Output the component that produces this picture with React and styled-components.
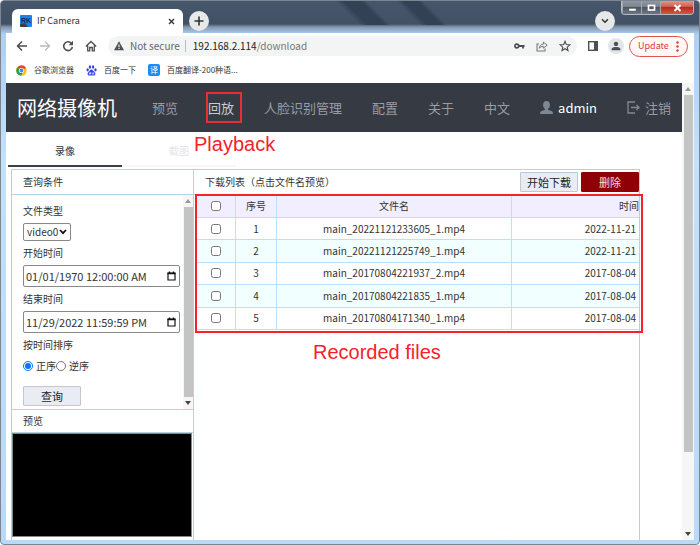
import React, { useState } from "react";
import styled, { createGlobalStyle } from "styled-components";

const FILES = [
  { id: 1, name: "main_20221121233605_1.mp4", date: "2022-11-21" },
  { id: 2, name: "main_20221121225749_1.mp4", date: "2022-11-21" },
  { id: 3, name: "main_20170804221937_2.mp4", date: "2017-08-04" },
  { id: 4, name: "main_20170804221835_1.mp4", date: "2017-08-04" },
  { id: 5, name: "main_20170804171340_1.mp4", date: "2017-08-04" },
];

const NAV = ["预览", "回放", "人脸识别管理", "配置", "关于"];

export default function App() {
  const [order, setOrder] = useState("asc");
  const [checked, setChecked] = useState([]);

  const toggle = (id) =>
    setChecked(checked.includes(id) ? checked.filter((c) => c !== id) : [...checked, id]);
  const toggleAll = () =>
    setChecked(checked.length === FILES.length ? [] : FILES.map((f) => f.id));

  return (
    <>
      <GlobalStyle />
      <Window>
        <TitleBar>
          <BrowserTab>
            <Favicon />
            <span>IP Camera</span>
            <TabClose aria-label="Close tab">
              <svg width="7" height="7" viewBox="0 0 7 7">
                <path d="M1 1L6 6M6 1L1 6" stroke="#333" strokeWidth="1.4" />
              </svg>
            </TabClose>
          </BrowserTab>
          <RoundButton aria-label="New tab">
            <svg width="10" height="10" viewBox="0 0 10 10">
              <path d="M5 .5V9.500M.5 5H9.500" stroke="#333" strokeWidth="1.6" />
            </svg>
          </RoundButton>
          <Spacer />
          <RoundButton aria-label="Search tabs">
            <svg width="8" height="6" viewBox="0 0 8 6">
              <path d="M1 1.200L4 4.200L7 1.200" stroke="#333" strokeWidth="1.5" fill="none" />
            </svg>
          </RoundButton>
          <WindowButtons>
            <WindowButton aria-label="Minimize">
              <svg width="9" height="8" viewBox="0 0 9 8">
                <rect x="1" y="4.500" width="7" height="2.500" fill="#fff" stroke="#555" strokeWidth=".4" />
              </svg>
            </WindowButton>
            <WindowButton aria-label="Maximize">
              <svg width="9" height="8" viewBox="0 0 9 8">
                <rect x="1.500" y="1.500" width="6" height="4.500" fill="#555" stroke="#fff" strokeWidth="1.700" />
              </svg>
            </WindowButton>
            <WindowButton aria-label="Close" $close>
              <svg width="9" height="8" viewBox="0 0 9 8">
                <path d="M1.500 1L7.500 7M7.500 1L1.500 7" stroke="#fff" strokeWidth="2" />
              </svg>
            </WindowButton>
          </WindowButtons>
        </TitleBar>

        <Toolbar>
          <IconButton aria-label="Back">
            <svg width="12" height="12" viewBox="0 0 12 12">
              <path d="M11 6H2M6 1.500L1.500 6L6 10.500" stroke="#4c4f54" strokeWidth="1.5" fill="none" />
            </svg>
          </IconButton>
          <IconButton aria-label="Forward">
            <svg width="12" height="12" viewBox="0 0 12 12">
              <path d="M1 6H10M6 1.500L10.500 6L6 10.500" stroke="#b9bbbe" strokeWidth="1.3" fill="none" />
            </svg>
          </IconButton>
          <IconButton aria-label="Reload">
            <svg width="12" height="12" viewBox="0 0 12 12">
              <path d="M9.800 3.800A4.400 4.400 0 1 0 10.400 7" stroke="#4c4f54" strokeWidth="1.6" fill="none" />
              <path d="M11 .8V5.200H6.600Z" fill="#4c4f54" />
            </svg>
          </IconButton>
          <IconButton aria-label="Home">
            <svg width="12" height="12" viewBox="0 0 12 12">
              <path d="M.8 6.500L6 1.500L11.200 6.500M2.700 5.500V10.800H4.700V7.500H7.300V10.800H9.300V5.500" stroke="#4c4f54" strokeWidth="1.3" fill="none" />
            </svg>
          </IconButton>
          <AddressBar>
            <svg width="10" height="10" viewBox="0 0 10 10">
              <path d="M5 .3L10 9.300H0Z" fill="#4c4f54" />
              <path d="M5 3.500V6.200M5 7V8.100" stroke="#fff" strokeWidth="1.100" />
            </svg>
            <Secure>Not secure</Secure>
            <Url>
              192.168.2.114<em>/download</em>
            </Url>
            <AddressIcons>
              <svg width="11" height="8" viewBox="0 0 11 8">
                <circle cx="2.800" cy="4" r="1.900" fill="none" stroke="#4c4f54" strokeWidth="1.600" />
                <path d="M4.800 4H10.500M9 4V6.400" stroke="#4c4f54" strokeWidth="1.800" />
              </svg>
              <svg width="12" height="12" viewBox="0 0 12 12">
                <path d="M3 4H1V11H9V8.500" stroke="#777" strokeWidth="1.100" fill="none" />
                <path d="M3.300 8.300C3.500 5.500 5 4.300 7.300 4.200V2L11.200 5.200L7.300 8.200V6.300C5.500 6.300 4.300 6.800 3.300 8.300Z" stroke="#777" fill="none" />
              </svg>
              <svg width="12" height="12" viewBox="0 0 12 12">
                <path d="M6 1.300L7.300 4.500L10.800 4.800L8.200 7.100L9 10.500L6 8.700L3 10.500L3.800 7.100L1.200 4.800L4.700 4.500Z" stroke="#4c4f54" strokeWidth="1.100" fill="none" />
              </svg>
            </AddressIcons>
          </AddressBar>
          <BarActions>
            <svg width="10" height="10" viewBox="0 0 10 10">
              <rect x=".7" y=".7" width="8.600" height="8.600" fill="none" stroke="#4c4f54" strokeWidth="1.400" />
              <rect x="6" y="1" width="3.300" height="8" fill="#4c4f54" />
            </svg>
            <Avatar aria-label="Profile">
              <svg width="10" height="10" viewBox="0 0 10 10">
                <circle cx="5" cy="2.900" r="2.200" fill="#4c5058" />
                <path d="M.6 9.300V8C.6 6.500 3 5.900 5 5.900S9.400 6.500 9.400 8V9.300Z" fill="#4c5058" />
              </svg>
            </Avatar>
            <UpdateButton>
              Update
              <svg width="3" height="11" viewBox="0 0 3 11">
                <circle cx="1.500" cy="1.500" r="1.200" fill="#dd3a34" />
                <circle cx="1.500" cy="5.500" r="1.200" fill="#dd3a34" />
                <circle cx="1.500" cy="9.500" r="1.200" fill="#dd3a34" />
              </svg>
            </UpdateButton>
          </BarActions>
        </Toolbar>

        <Bookmarks>
          <a href="#chrome">
            <svg width="11" height="11" viewBox="0 0 12 12">
              <circle cx="6" cy="6" r="5.700" fill="#fbc116" />
              <path d="M6 6L1.100 3.100A5.700 5.700 0 0 1 11 3.200Z" fill="#dd4a3d" />
              <path d="M6 6L1.100 3.100A5.700 5.700 0 0 0 5.500 11.700L8 7Z" fill="#259b55" />
              <circle cx="6" cy="6" r="2.800" fill="#fff" />
              <circle cx="6" cy="6" r="2.100" fill="#4285f4" />
            </svg>
            谷歌浏览器
          </a>
          <a href="#baidu">
            <svg width="11" height="11" viewBox="0 0 12 12" fill="#3245df">
              <ellipse cx="1.800" cy="5.300" rx="1.300" ry="1.700" />
              <ellipse cx="4.300" cy="2.200" rx="1.300" ry="1.800" />
              <ellipse cx="7.700" cy="2.200" rx="1.300" ry="1.800" />
              <ellipse cx="10.300" cy="5.300" rx="1.300" ry="1.700" />
              <path d="M6 4.900C4.500 4.900 4 6.700 2.700 7.600C1.200 8.800 1.500 11.600 3.700 11.500C5 11.400 7 11.400 8.300 11.500C10.500 11.600 10.800 8.800 9.300 7.600C8 6.700 7.500 4.900 6 4.900Z" />
              <path d="M4.900 7.800V10H3.600V8.600H4.900M6.800 8V10H8.400V8" fill="none" stroke="#fff" strokeWidth=".7" />
            </svg>
            百度一下
          </a>
          <a href="#translate">
            <TranslateIcon>译</TranslateIcon>
            百度翻译-200种语...
          </a>
        </Bookmarks>

        <Viewport>
          <Page>
            <Header>
              <Brand>网络摄像机</Brand>
              <Nav>
                {NAV.map((item) => (
                  <NavLink key={item} href={"#" + item} $active={item === "回放"}>
                    {item}
                    {item === "回放" && <NavMark />}
                    {item === "回放" && <PlaybackNote>Playback</PlaybackNote>}
                  </NavLink>
                ))}
                <NavLink href="#lang">中文</NavLink>
                <NavLink href="#user" $bright>
                  <svg width="13" height="13" viewBox="0 0 13 13" fill="#7e8794">
                    <ellipse cx="6.500" cy="4" rx="3.400" ry="3.900" />
                    <path d="M5 7H8V8.800L12 10.200Q13 10.700 13 13H0Q0 10.700 1 10.200L5 8.800Z" />
                  </svg>
                  admin
                </NavLink>
                <NavLink href="#logout">
                  <svg width="13" height="13" viewBox="0 0 13 13" fill="none" stroke="#858a92" strokeWidth="1.300">
                    <path d="M8 1H1V12H8M4 6.500H12M9.500 4L12 6.500L9.500 9" />
                  </svg>
                  注销
                </NavLink>
              </Nav>
            </Header>

            <Tabs>
              <TabButton $active>录像</TabButton>
              <TabButton>截图</TabButton>
            </Tabs>

            <Panels>
              <Side>
                <PanelHead>查询条件</PanelHead>
                <QueryArea>
                  <QueryForm onSubmit={(e) => e.preventDefault()}>
                    <label htmlFor="type">文件类型</label>
                    <SelectBox>
                      <TypeSelect id="type">
                        <option>video0</option>
                      </TypeSelect>
                      <svg width="8" height="6" viewBox="0 0 8 6">
                        <path d="M1 1L4 4.200L7 1" stroke="#111" strokeWidth="1.8" fill="none" />
                      </svg>
                    </SelectBox>
                    <label htmlFor="start">开始时间</label>
                    <DateField id="start" value="01/01/1970 12:00:00 AM" />
                    <label htmlFor="end">结束时间</label>
                    <DateField id="end" value="11/29/2022 11:59:59 PM" />
                    <span>按时间排序</span>
                    <Radios>
                      <label>
                        <input type="radio" name="order" checked={order === "asc"} onChange={() => setOrder("asc")} />
                        正序
                      </label>
                      <label>
                        <input type="radio" name="order" checked={order === "desc"} onChange={() => setOrder("desc")} />
                        逆序
                      </label>
                    </Radios>
                    <Button type="submit">查询</Button>
                  </QueryForm>
                  <ScrollBar />
                </QueryArea>
                <PreviewHead>预览</PreviewHead>
                <Video />
              </Side>

              <Main>
                <ListHead>
                  <span>下载列表（点击文件名预览）</span>
                  <Button>开始下载</Button>
                  <Button $danger>删除</Button>
                </ListHead>
                <TableArea>
                  <Table>
                    <colgroup>
                      <col width="39" />
                      <col width="41" />
                      <col />
                      <col width="127" />
                    </colgroup>
                    <thead>
                      <tr>
                        <th>
                          <Check
                            aria-label="全选"
                            checked={checked.length === FILES.length}
                            onChange={toggleAll}
                          />
                        </th>
                        <th>序号</th>
                        <th>文件名</th>
                        <th>时间</th>
                      </tr>
                    </thead>
                    <tbody>
                      {FILES.map((file) => (
                        <tr key={file.id}>
                          <td>
                            <Check
                              aria-label={file.name}
                              checked={checked.includes(file.id)}
                              onChange={() => toggle(file.id)}
                            />
                          </td>
                          <td>{file.id}</td>
                          <td>{file.name}</td>
                          <td>{file.date}</td>
                        </tr>
                      ))}
                    </tbody>
                  </Table>
                  <TableMark />
                  <FilesNote>Recorded files</FilesNote>
                </TableArea>
              </Main>
            </Panels>
          </Page>
          <ScrollBar $page />
        </Viewport>
      </Window>
    </>
  );
}

function Favicon() {
  return (
    <svg width="12" height="12" viewBox="0 0 12 12">
      <rect width="12" height="12" rx="1" fill="#1684ef" />
      <path d="M0 9L5 8L8 12H1Q0 12 0 11Z" fill="#443b43" />
      <text x="1" y="8" fontSize="7" fontWeight="700" fontFamily="Liberation Sans, sans-serif" fill="#132c50">RK</text>
    </svg>
  );
}

function DateField({ id, value }) {
  return (
    <DateBox>
      <input id={id} type="text" defaultValue={value} />
      <IconButton type="button" aria-label="选择日期">
        <svg width="9" height="10" viewBox="0 0 9 10">
          <path d="M1 2H8V9H1Z" fill="none" stroke="#111" strokeWidth="1.2" />
          <path d="M.5 2.500H8.500M2.500 .5V2.500M6.500 .5V2.500" stroke="#111" strokeWidth="1.4" />
        </svg>
      </IconButton>
    </DateBox>
  );
}

function ScrollBar({ $page }) {
  return (
    <Track $page={$page}>
      <svg width="6" height="4" viewBox="0 0 6 4">
        <path d="M3 0L6 4H0Z" fill="#999" />
      </svg>
      <Thumb $page={$page} />
      <svg width="6" height="4" viewBox="0 0 6 4">
        <path d="M3 4L6 0H0Z" fill="#444" />
      </svg>
    </Track>
  );
}

const GlobalStyle = createGlobalStyle`
  * {
    box-sizing: border-box;
  }

  body {
    margin: 0;
    font: 10px/16px "Noto Sans CJK SC", "Noto Sans", sans-serif;
    color: #333;
  }

  button, input, select {
    font: inherit;
    color: inherit;
    margin: 0;
  }

  button {
    cursor: pointer;
  }

  a {
    color: inherit;
    text-decoration: none;
  }

  svg {
    display: block;
    flex: none;
  }
`;

const Window = styled.div`
  display: flex;
  flex-direction: column;
  min-height: 100vh;
  padding: 0 5px 4px;
  border: 1px solid #7d8590;
  border-radius: 4px;
  background: linear-gradient(#46566b 0, #425165 23px, #8396ad 26px, #acd0f3 33px, #c2e1fc 160px, #b9d9f8);
`;

const TitleBar = styled.div`
  display: flex;
  height: 32px;
  align-items: flex-start;
  background: linear-gradient(
      45deg,
      transparent 250px,
      #334155 256px,
      #334155 268px,
      transparent 272px,
      transparent 293px,
      #334155 298px,
      #334155 308px,
      transparent 312px
    )
    0 0 / 100% 24px no-repeat;
`;

const BrowserTab = styled.div`
  display: flex;
  align-items: center;
  gap: 5px;
  width: 171px;
  height: 24px;
  margin: 8px 6px 0;
  padding: 0 8px;
  background: #fff;
  border-radius: 6px 6px 0 0;
  font-size: 9px;
`;

const TabClose = styled.button`
  margin-left: auto;
  padding: 0;
  border: none;
  background: none;
`;

const RoundButton = styled.button`
  display: flex;
  align-items: center;
  justify-content: center;
  width: 20px;
  height: 20px;
  margin-top: 10px;
  padding: 0;
  border: none;
  border-radius: 50%;
  background: #e6e8ea;
`;

const Spacer = styled.div`
  flex: 1;
`;

const WindowButtons = styled.div`
  display: flex;
  margin-left: 6px;
  border: 1px solid #b4b9c0;
  border-top: none;
  border-radius: 0 0 4px 4px;
  overflow: hidden;
`;

const WindowButton = styled.button`
  display: flex;
  align-items: center;
  justify-content: center;
  width: ${({ $close }) => ($close ? "33px" : "19px")};
  height: 13px;
  padding: 0;
  border: none;
  border-left: 1px solid #a4a9b0;
  background: ${({ $close }) =>
    $close
      ? "linear-gradient(#dc9a90, #cb5548 50%, #b52d20 50%, #cf5a43)"
      : "linear-gradient(#9299a3, #757e8a 50%, #4c5663 50%, #6f7884)"};
`;

const Toolbar = styled.div`
  display: flex;
  align-items: center;
  height: 26px;
  padding: 0 6px 0 10px;
  gap: 11px;
  background: #fff;
`;

const IconButton = styled.button`
  padding: 0;
  border: none;
  background: none;
`;

const AddressBar = styled.div`
  flex: 1;
  display: flex;
  align-items: center;
  height: 20px;
  padding: 0 6px;
  border-radius: 10px;
  background: #f3f5f4;
`;

const Secure = styled.span`
  margin-left: 6px;
  padding-right: 5px;
  line-height: 12px;
  border-right: 1px solid #b9bcc0;
  color: #666;
`;

const Url = styled.span`
  flex: 1;
  margin-left: 7px;
  color: #222;

  em {
    font-style: normal;
    color: #777;
  }
`;

const AddressIcons = styled.div`
  display: flex;
  align-items: center;
  gap: 11px;
`;

const BarActions = styled.div`
  display: flex;
  align-items: center;
  gap: 10px;
`;

const Avatar = styled.button`
  display: flex;
  align-items: center;
  justify-content: center;
  width: 16px;
  height: 16px;
  padding: 0;
  border: none;
  border-radius: 50%;
  background: #e3e6e9;
`;

const UpdateButton = styled.button`
  display: flex;
  align-items: center;
  justify-content: space-between;
  width: 59px;
  height: 21px;
  margin-left: -5px;
  padding: 0 8px;
  border: 1px solid #e0524b;
  border-radius: 11px;
  background: #fff8f7;
  color: #dd3a34;
  font-size: 9px;
`;

const Bookmarks = styled.div`
  display: flex;
  align-items: center;
  gap: 12px;
  height: 24px;
  padding: 0 10px 2px;
  background: #fff;
  font-size: 8px;

  a {
    display: flex;
    align-items: center;
    gap: 7px;
  }
`;

const TranslateIcon = styled.span`
  width: 12px;
  height: 12px;
  border-radius: 2px;
  background: #1d8cf0;
  color: #fff;
  line-height: 12px;
  text-align: center;
`;

const Viewport = styled.div`
  flex: 1;
  display: flex;
  background: #fff;
`;

const Page = styled.main`
  flex: 1;
  min-width: 0;
  display: flex;
  flex-direction: column;
`;

const Header = styled.header`
  display: flex;
  align-items: center;
  gap: 35px;
  height: 49px;
  padding-left: 11px;
  background: #353a43;
  white-space: nowrap;
`;

const Brand = styled.h1`
  margin: 0;
  color: #fff;
  font-size: 20px;
  font-weight: 400;
  line-height: 28px;
`;

const Nav = styled.nav`
  display: flex;
  align-items: center;
  gap: 30px;
  font-size: 13px;
  line-height: 20px;
`;

const NavLink = styled.a`
  position: relative;
  display: flex;
  align-items: center;
  gap: 5px;
  color: ${({ $active, $bright }) => ($bright ? "#fff" : $active ? "#c9cbcf" : "#999ca2")};
`;

const NavMark = styled.i`
  position: absolute;
  inset: -6px -8px -5px -2px;
  border: 2px solid #e53030;
`;

const Note = styled.strong`
  position: absolute;
  color: #f5222a;
  font: 400 20px/22px "Liberation Sans", sans-serif;
  white-space: nowrap;
`;

const PlaybackNote = styled(Note)`
  top: 35px;
  left: -14px;
`;

const Tabs = styled.div`
  display: flex;
  margin: 0 2px 2px;
`;

const TabButton = styled.button`
  width: 114px;
  height: 35px;
  padding: 4px 0 0;
  border: none;
  border-bottom: 2px solid ${({ $active }) => ($active ? "#3b4049" : "#f6f6f6")};
  background: none;
  color: ${({ $active }) => ($active ? "#333" : "#e4e4ea")};
`;

const Panels = styled.div`
  flex: 1;
  display: flex;
  margin: 0 42px 0 5px;
  border: 1px solid #b3d2e6;
  border-bottom: none;
`;

const Side = styled.section`
  display: flex;
  flex-direction: column;
  width: 182px;
  border-right: 1px solid #b3d2e6;
`;

const PanelHead = styled.div`
  display: flex;
  align-items: center;
  height: 25px;
  padding-left: 11px;
  border-bottom: 1px solid #b3d2e6;
`;

const PreviewHead = styled(PanelHead)`
  height: 24px;
  border-top: 1px solid #b3d2e6;
`;

const QueryArea = styled.div`
  display: flex;
  justify-content: space-between;
`;

const QueryForm = styled.form`
  display: flex;
  flex-direction: column;
  align-items: flex-start;
  gap: 4px;
  padding: 8px 0 3px 11px;
`;

const SelectBox = styled.div`
  display: flex;
  align-items: center;

  svg {
    margin-left: -12px;
    pointer-events: none;
  }
`;

const TypeSelect = styled.select`
  appearance: none;
  height: 18px;
  width: 48px;
  padding: 0 0 0 3px;
  border: 1px solid #888;
  border-radius: 2px;
  background: #fff;
`;

const DateBox = styled.div`
  display: flex;
  align-items: center;
  width: 157px;
  height: 22px;
  padding: 0 3px 0 2px;
  border: 1px solid #888;
  border-radius: 2px;
  background: #fff;

  input {
    flex: 1;
    min-width: 0;
    padding: 0;
    border: none;
    outline: none;
    background: none;
    font-size: 11px;
  }
`;

const Radios = styled.div`
  display: flex;
  height: 18px;
  margin-bottom: 7px;

  label {
    display: flex;
    align-items: center;
    gap: 3px;
  }

  input {
    width: 10px;
    height: 10px;
  }
`;

const Button = styled.button`
  width: 58px;
  height: 20px;
  padding: 0;
  border: 1px solid ${({ $danger }) => ($danger ? "#8b0000" : "#c4c8cd")};
  border-radius: 1px;
  background: ${({ $danger }) => ($danger ? "#8f0006" : "#e9edf3")};
  color: ${({ $danger }) => ($danger ? "#f4dede" : "#222")};
  font-size: 11px;
  line-height: 16px;
`;

const Video = styled.div`
  flex: 1;
  min-height: 60px;
  margin: 0 1px 3px 0;
  border: 1px solid #7f8a8c;
  background: #000;
`;

const Main = styled.section`
  flex: 1;
  min-width: 0;
`;

const ListHead = styled(PanelHead)`
  gap: 3px;

  span {
    flex: 1;
  }
`;

const TableArea = styled.div`
  position: relative;
  margin-left: 3px;
`;

const Table = styled.table`
  width: 100%;
  height: 135px;
  table-layout: fixed;
  border-collapse: separate;
  border-spacing: 0;
  text-align: center;

  th, td {
    height: 22px;
    padding: 0;
    border-right: 1px solid #b9e1ff;
    border-bottom: 1px solid #b9e1ff;
    font-weight: 400;
  }

  th {
    height: 23px;
    background: #f0eeff;
  }

  th:last-child, td:last-child {
    border-right: none;
    text-align: right;
  }

  td:last-child {
    padding-right: 3px;
  }

  tbody tr:nth-child(even) {
    background: #f1ffff;
  }
`;

const Check = styled.input.attrs({ type: "checkbox" })`
  display: block;
  width: 10px;
  height: 10px;
  margin: 0 auto;
`;

const TableMark = styled.i`
  position: absolute;
  inset: -1px -4px -3px -2px;
  border: 2px solid #f5222a;
  pointer-events: none;
`;

const FilesNote = styled(Note)`
  top: 146px;
  left: 116px;
`;

const Track = styled.div`
  display: flex;
  flex-direction: column;
  align-items: center;
  justify-content: space-between;
  width: ${({ $page }) => ($page ? "12px" : "10px")};
  padding: 4px 0;
  gap: 4px;
  background: #f5f6f5;
`;

const Thumb = styled.div`
  flex: 1;
  width: 9px;
  margin-bottom: ${({ $page }) => ($page ? "76px" : "0")};
  background: #c3c5c4;
`;
